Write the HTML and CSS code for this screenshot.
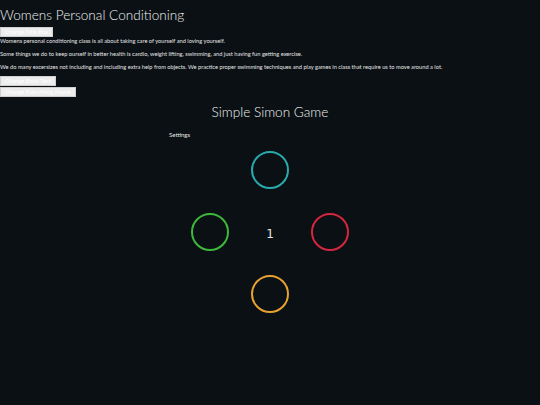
FILE: index.html
```html
<!DOCTYPE html>
<html>
<head>
<meta charset="utf-8">
<link rel="stylesheet" href="styles.css">
</head>
<body>
<header class="intro">
  <h1 class="title">Womens Personal Conditioning</h1>
  <button class="btn">Change Title Box</button>
  <p class="para">Womens personal conditioning class is all about taking care of yourself and loving yourself.</p>
  <p class="para">Some things we do to keep ourself in better health is cardio, weight lifting, swimming, and just having fun getting exercise.</p>
  <p class="para">We do many excersizes not including and including extra help from objects. We practice proper swimming techniques and play games in class that require us to move around a lot.</p>
  <div class="btns">
    <button class="btn">Change Body Text</button>
    <button class="btn">Change Everything Above</button>
  </div>
</header>
<main class="game">
  <h2 class="game-title">Simple Simon Game</h2>
  <div class="settings">Settings</div>
  <div class="board">
    <div class="cell c-top"><span class="ring ring-cyan"></span></div>
    <div class="cell c-left"><span class="ring ring-green"></span></div>
    <div class="cell c-mid"><span class="count">1</span></div>
    <div class="cell c-right"><span class="ring ring-red"></span></div>
    <div class="cell c-bottom"><span class="ring ring-orange"></span></div>
  </div>
</main>
</body>
</html>
```
FILE: styles.css
```css
html, body {
  margin: 0;
  padding: 0;
  background: #0a1014;
  color: #e6e6e6;
  font-family: "Lato", "Open Sans", sans-serif;
}
.intro {
  display: flex;
  flex-direction: column;
  align-items: flex-start;
}
.title {
  font-size: 13.6px;
  font-weight: 300;
  margin: 6px 0 3px 0;
  line-height: 18px;
  color: #f0f0f0;
}
.btn {
  font-family: "Lato", sans-serif;
  font-size: 5.8px;
  line-height: 6px;
  padding: 1px 4px;
  margin: 0;
  border: 1px solid #cfcfcf;
  background: #ececec;
  color: #ffffff;
  border-radius: 0;
}
.para {
  font-size: 5.7px;
  line-height: 8px;
  margin: 0 0 5px 0;
}
.btns {
  display: flex;
  flex-direction: column;
  align-items: flex-start;
  gap: 1px;
}
.game {
  display: flex;
  flex-direction: column;
  align-items: center;
}
.game-title {
  font-size: 13.6px;
  font-weight: 300;
  margin: 7px 0 11px 0;
  line-height: 16px;
  color: #f0f0f0;
}
.settings {
  align-self: flex-start;
  margin-left: 169px;
  font-size: 6px;
  line-height: 8px;
}
.board {
  display: grid;
  grid-template-columns: 60px 60px 60px;
  grid-template-rows: 62px 62px 61px;
  grid-template-areas:
    ". top ."
    "left mid right"
    ". bottom .";
}
.c-top { grid-area: top; }
.c-left { grid-area: left; }
.c-mid { grid-area: mid; }
.c-right { grid-area: right; }
.c-bottom { grid-area: bottom; }
.cell {
  display: flex;
  align-items: center;
  justify-content: center;
}
.ring {
  width: 34px;
  height: 34px;
  border-radius: 50%;
  border: 2px solid;
}
.ring-cyan { border-color: #28a9ab; }
.ring-green { border-color: #3cb83a; }
.ring-red { border-color: #d5263f; }
.ring-orange { border-color: #e8a131; }
.count {
  font-family: "DejaVu Sans", sans-serif;
  font-size: 12px;
  padding-top: 3px;
}
```
